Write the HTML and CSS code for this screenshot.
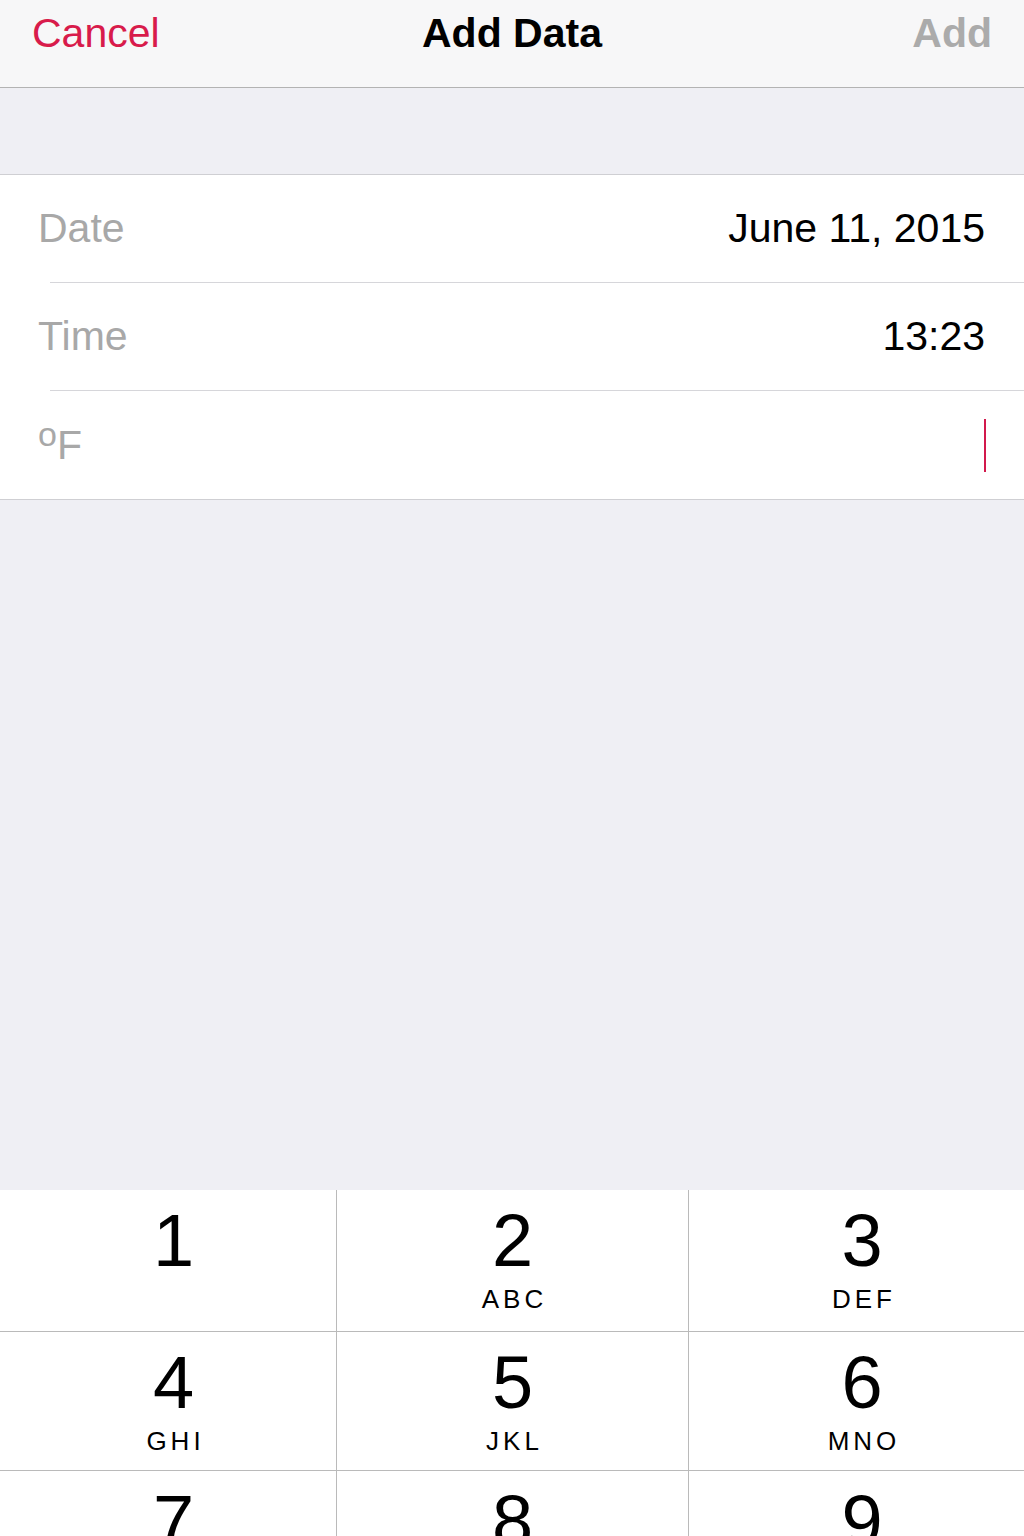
FILE: index.html
```
<!DOCTYPE html>
<html lang="en">
<head>
    <meta charset="UTF-8">
    <title>Add Data</title>
    <link rel="stylesheet" href="styles.css">
</head>
<body>
    <header class="nav-bar">
        <span class="nav-bar__cancel">Cancel</span>
        <span class="nav-bar__title">Add Data</span>
        <span class="nav-bar__add">Add</span>
    </header>

    <div class="spacer-top"></div>

    <section class="entry-list">
        <div class="entry-row">
            <span class="entry-row__label">Date</span>
            <span class="entry-row__value">June 11, 2015</span>
        </div>
        <div class="entry-sep"></div>
        <div class="entry-row">
            <span class="entry-row__label">Time</span>
            <span class="entry-row__value">13:23</span>
        </div>
        <div class="entry-sep"></div>
        <div class="entry-row">
            <span class="entry-row__label"><span class="unit-deg">o</span>F</span>
            <span class="entry-row__cursor"></span>
        </div>
    </section>

    <section class="keypad">
        <div class="key key--side"><span class="key__digit">1</span></div>
        <div class="key"><span class="key__digit">2</span><span class="key__letters">ABC</span></div>
        <div class="key key--side"><span class="key__digit">3</span><span class="key__letters">DEF</span></div>
        <div class="key key--side"><span class="key__digit">4</span><span class="key__letters">GHI</span></div>
        <div class="key"><span class="key__digit">5</span><span class="key__letters">JKL</span></div>
        <div class="key key--side"><span class="key__digit">6</span><span class="key__letters">MNO</span></div>
        <div class="key key--side"><span class="key__digit">7</span><span class="key__letters">PQRS</span></div>
        <div class="key"><span class="key__digit">8</span><span class="key__letters">TUV</span></div>
        <div class="key key--side"><span class="key__digit">9</span><span class="key__letters">WXYZ</span></div>
    </section>
</body>
</html>
```

FILE: styles.css
```
html, body {
    margin: 0;
    padding: 0;
}

body {
    width: 1024px;
    height: 1536px;
    overflow: hidden;
    background-color: #efeff4;
    font-family: "Liberation Sans", Arial, sans-serif;
}

.nav-bar {
    display: grid;
    grid-template-columns: 1fr auto 1fr;
    align-items: start;
    height: 78px;
    padding: 9px 32px 0 32px;
    background-color: #f7f7f8;
    border-bottom: 1px solid #b3b3b3;
    font-size: 41px;
    line-height: 48px;
}

.nav-bar__cancel {
    justify-self: start;
    color: #d81b4b;
}

.nav-bar__title {
    font-weight: bold;
    color: #000;
}

.nav-bar__add {
    justify-self: end;
    font-weight: bold;
    color: #ababab;
}

.spacer-top {
    height: 86px;
    border-bottom: 1px solid #cfcfd3;
}

.entry-list {
    background-color: #fff;
    border-bottom: 1px solid #cfcfd3;
}

.entry-row {
    display: flex;
    justify-content: space-between;
    align-items: center;
    height: 107px;
    padding: 0 39px 0 38px;
    font-size: 41px;
    line-height: 107px;
}

.entry-row:last-child {
    height: 108px;
}

.entry-sep {
    height: 1px;
    margin-left: 50px;
    background-color: #d6d6da;
}

.entry-row__label {
    color: #a8a8a8;
}

.entry-row__value {
    color: #000;
}

.unit-deg {
    font-size: 34px;
    vertical-align: 13px;
    line-height: 0;
}

.entry-row__cursor {
    width: 2px;
    height: 53px;
    margin-right: -1px;
    background-color: #d2194c;
}

.keypad {
    display: grid;
    grid-template-columns: 336px 351px 1fr;
    grid-template-rows: 141px 138px 138px;
    gap: 1px;
    margin-top: 690px;
    background-color: #bababa;
}

.key {
    display: flex;
    flex-direction: column;
    align-items: center;
    background-color: #fff;
    color: #000;
}

.key--side {
    padding-left: 11px;
}

.key__digit {
    margin-top: 11px;
    font-size: 74px;
    line-height: 80px;
}

.key__letters {
    margin-top: 4px;
    padding-left: 4px;
    font-size: 26px;
    line-height: 28px;
    letter-spacing: 4px;
}
```
